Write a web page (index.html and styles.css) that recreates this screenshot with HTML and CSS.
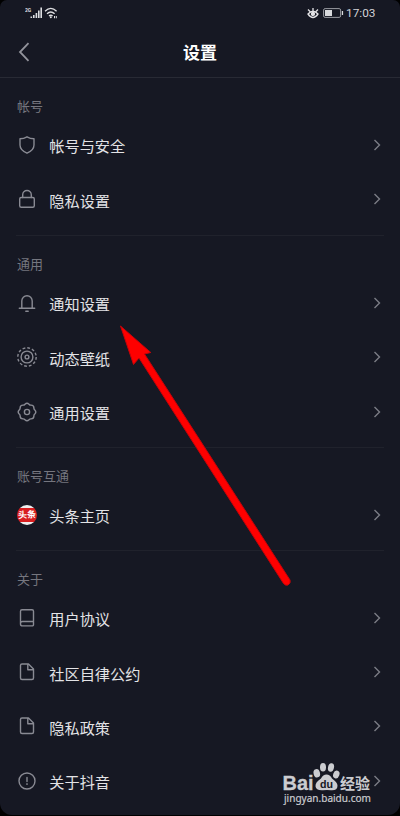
FILE: index.html
```html
<!DOCTYPE html>
<html lang="zh-CN">
<head>
<meta charset="utf-8">
<title>设置</title>
<link rel="stylesheet" href="styles.css">
</head>
<body>
<svg class="defs" width="0" height="0">
  <symbol id="chev" viewBox="0 0 8 12"><path d="M1.500 1 6.500 6 1.500 11"/></symbol>
  <symbol id="file" viewBox="0 0 20 20"><path d="M5 2h6.500l5 5V16a1.500 1.500 0 0 1-1.500 1.500H5A1.500 1.500 0 0 1 3.500 16V3.500A1.500 1.500 0 0 1 5 2zM10.800 2v5.700h5.700"/></symbol>
</svg>
<div class="screen">
  <div class="status">
    <svg class="signal" width="36" height="14" viewBox="0 0 36 14">
      <text x="0" y="5.500" class="net">2G</text>
      <path class="fill" d="M5.500 10.500h1.600V12H5.500zM8 9h1.600v3H8zM10.600 7h1.600v5h-1.600zM13 4.500h1.600V12H13zM15.400 1.500h1.600V12h-1.600z"/>
      <path class="wave" d="M20 5.200q5.800-5.600 11.600 0M22 7.800q3.800-3.600 7.600 0M24 10q1.800-1.600 3.600 0"/>
      <circle class="fill" cx="25.800" cy="11.300" r="1"/><path class="fill" d="M29 10h1v2.300h-1zM30.800 10h1v2.300h-1z"/>
    </svg>
    <div class="status-right">
      <svg class="eye" width="12" height="12" viewBox="0 0 12 12"><path d="M1 7q5-5.500 10 0-5 7-10 0zM6 3.800V1M3 4.500 1 2.500M9 4.500l2-2"/><circle cx="6" cy="6.900" r="1.500"/></svg>
      <svg class="battery" width="21" height="10" viewBox="0 0 21 10"><rect x=".6" y=".6" width="17" height="8.800" rx="1.500"/><path d="M2 2h7v6H2zM18.800 3h1.300v4h-1.300z"/></svg>
      <span>17:03</span>
    </div>
  </div>
  <header class="bar">
    <svg class="back" width="12" height="20" viewBox="0 0 12 20"><path d="M10.500 1.200 2 10l8.500 8.800"/></svg>
    <h1>设置</h1>
  </header>
  <section>
    <h2>帐号</h2>
    <div class="row"><svg class="icon" viewBox="0 0 20 20"><path d="M10 1.800q3.200 2 7 2V10q0 5-7 8.200Q3 15 3 10V3.800q3.800 0 7-2z"/></svg><span>帐号与安全</span><svg class="chev"><use href="#chev"/></svg></div>
    <div class="row"><svg class="icon" viewBox="0 0 20 20"><rect x="2.700" y="8.500" width="14.600" height="9.800" rx="1.500"/><path d="M5.700 8.500V5.800a4.300 4.300 0 0 1 8.600 0v2.700"/></svg><span>隐私设置</span><svg class="chev"><use href="#chev"/></svg></div>
  </section>
  <section>
    <h2>通用</h2>
    <div class="row"><svg class="icon" viewBox="0 0 20 20"><path d="M2.300 15.300h15.400M4.800 15.300V8a5.200 5.200 0 0 1 10.400 0v7.300M8.800 18.200h2.400"/></svg><span>通知设置</span><svg class="chev"><use href="#chev"/></svg></div>
    <div class="row"><svg class="icon" viewBox="0 0 20 20"><circle class="dashes" cx="10" cy="10" r="9.200"/><circle cx="10" cy="10" r="5.900"/><circle cx="10" cy="10" r="1.900"/></svg><span>动态壁纸</span><svg class="chev"><use href="#chev"/></svg></div>
    <div class="row"><svg class="icon" viewBox="0 0 20 20"><path d="M8 2.200Q10 .2 12 2.200 12.800 3.200 14.100 3.100 16.900 3.100 16.900 5.900 16.800 7.200 17.800 8 19.800 10 17.800 12 16.800 12.800 16.900 14.100 16.900 16.900 14.100 16.900 12.800 16.800 12 17.800 10 19.800 8 17.800 7.200 16.800 5.900 16.900 3.100 16.900 3.100 14.100 3.200 12.800 2.200 12 .2 10 2.200 8 3.200 7.200 3.100 5.900 3.100 3.100 5.900 3.100 7.200 3.200 8 2.200z"/><circle cx="10" cy="10" r="2.600"/></svg><span>通用设置</span><svg class="chev"><use href="#chev"/></svg></div>
  </section>
  <section>
    <h2>账号互通</h2>
    <div class="row"><div class="toutiao"><b>头条</b></div><span>头条主页</span><svg class="chev"><use href="#chev"/></svg></div>
  </section>
  <section>
    <h2>关于</h2>
    <div class="row"><svg class="icon" viewBox="0 0 20 20"><path d="M5 1.800h10a1.500 1.500 0 0 1 1.500 1.500v13.400a1.200 1.200 0 0 1-1.200 1.200H5.500a2 2 0 0 1-2-2V3.300A1.500 1.500 0 0 1 5 1.800zM3.500 15.500q0-2 2-2h11"/></svg><span>用户协议</span><svg class="chev"><use href="#chev"/></svg></div>
    <div class="row"><svg class="icon"><use href="#file"/></svg><span>社区自律公约</span><svg class="chev"><use href="#chev"/></svg></div>
    <div class="row"><svg class="icon"><use href="#file"/></svg><span>隐私政策</span><svg class="chev"><use href="#chev"/></svg></div>
    <div class="row"><svg class="icon" viewBox="0 0 20 20"><circle cx="10" cy="10" r="8"/><path d="M10 6.500v4M10 12.800v.6"/></svg><span>关于抖音</span><svg class="chev"><use href="#chev"/></svg></div>
  </section>
</div>
<svg class="arrow" width="180" height="270" viewBox="115 320 180 270"><path d="M120.500 326 150.800 352.500 144.500 354 290 580Q291 583.500 288 585 285.500 586 283.500 583.500L139 358 133.500 364.500z"/></svg>
<svg class="mark" width="100" height="50" viewBox="280 758 100 50">
  <text class="brand" x="282.500" y="789.500" textLength="31" lengthAdjust="spacingAndGlyphs">Bai</text>
  <ellipse cx="316.800" cy="773.300" rx="3.200" ry="4.200" transform="rotate(-15 316.800 773.300)"/><ellipse cx="323" cy="767.300" rx="3" ry="4.300"/><ellipse cx="331" cy="767.500" rx="3" ry="4.300" transform="rotate(12 331 767.500)"/><ellipse cx="336.300" cy="774.500" rx="3.100" ry="4" transform="rotate(20 336.300 774.500)"/>
  <path d="M326.500 774.500q3.500 0 5.500 4 5.500 4 5.500 7.300 0 5-6.500 4.500-4-.8-8 0-7 .5-7.500-4-.3-4 5.500-7.800 2-4 5.500-4z"/>
  <text class="du" x="320" y="787.500" textLength="13" lengthAdjust="spacingAndGlyphs">du</text>
  <text class="jy" x="340" y="788.500" textLength="30" lengthAdjust="spacingAndGlyphs">经验</text>
  <text class="url" x="284" y="802" textLength="87" lengthAdjust="spacingAndGlyphs">jingyan.baidu.com</text>
</svg>
</body>
</html>
```
FILE: styles.css
```css
* { box-sizing: border-box; }
body {
  margin: 0;
  height: 816px;
  overflow: hidden;
  background: #000;
  font-family: "Noto Sans CJK SC", sans-serif;
}
.defs { position: absolute; }
svg { fill: none; flex: none; }
.screen {
  height: 815px;
  background: #161823;
  border-radius: 7px 7px 12px 12px;
  overflow: hidden;
}
.status {
  height: 26px;
  padding: 0 24.500px 0 25px;
  display: flex;
  align-items: center;
  justify-content: space-between;
}
.signal .fill { fill: #dddee1; }
.net { fill: #dddee1; font: bold 5px Roboto, sans-serif; }
.wave { stroke: #dddee1; stroke-width: 1.300; }
.status-right {
  display: flex;
  align-items: center;
  color: #d2d3d7;
  font: 11.800px Roboto, sans-serif;
}
.eye { stroke: #e3e3e6; stroke-width: 1.300; margin-right: 4px; }
.eye circle { fill: #e3e3e6; }
.battery { margin-right: 2px; }
.battery rect { stroke: #999ba1; stroke-width: 1; }
.battery path { fill: #d8d9dc; }
.bar {
  height: 52px;
  display: grid;
  grid-template-columns: 60px 1fr 60px;
  align-items: center;
  border-bottom: 1px solid #282a34;
}
.back { margin-left: 18px; stroke: #92939b; stroke-width: 1.800; }
h1 {
  margin: 0;
  text-align: center;
  color: #fff;
  font-size: 17px;
  line-height: 24px;
  font-weight: 700;
}
section { margin: 0 16px; padding-bottom: 7px; }
section + section { border-top: 1px solid #20222c; padding-bottom: 6.500px; }
h2 {
  margin: 0;
  height: 41.300px;
  padding: 18px 0 0 1px;
  font-size: 13px;
  line-height: 20px;
  font-weight: 400;
  color: #75767f;
}
.row { height: 54.330px; display: flex; align-items: center; }
.row span {
  flex: 1;
  margin: 0 0 2px 12.300px;
  color: #e3e3e6;
  font-size: 15.200px;
  line-height: 24px;
}
.icon {
  width: 20px;
  height: 20px;
  margin: 0 0 3px 1px;
  stroke: #898a93;
  stroke-width: 1.400;
  stroke-linejoin: round;
  stroke-linecap: round;
}
.dashes { stroke-dasharray: 2.800 2.018; stroke-linecap: butt; }
.chev {
  width: 8px;
  height: 12px;
  margin: 0 3px 3px 0;
  stroke: #7b7c85;
  stroke-width: 1.400;
}
.toutiao {
  width: 20px;
  height: 20px;
  margin: 0 0 3px 1px;
  border-radius: 50%;
  background: linear-gradient(#eee 0 3px, #d81e20 3px 17.500px, #eee 17.500px);
  display: flex;
  align-items: center;
  justify-content: center;
  overflow: hidden;
}
.toutiao b { color: #fff; font-size: 9px; line-height: 14px; white-space: nowrap; transform: rotate(-4deg); }
.arrow {
  position: absolute;
  left: 115px;
  top: 320px;
  fill: #fe0000;
  stroke: #c50308;
  stroke-width: 1;
  stroke-linejoin: round;
}
.mark { position: absolute; left: 280px; top: 758px; fill: #cbccd0; }
.brand { font: bold 20px "Liberation Sans", sans-serif; stroke: #cbccd0; stroke-width: .3; }
.du { font: bold 11px "Liberation Sans", sans-serif; fill: #161823; }
.jy { font: bold 15px "Noto Sans CJK SC", sans-serif; }
.url { font: 10.500px "Noto Sans", sans-serif; stroke: #cbccd0; stroke-width: .2; }
```
